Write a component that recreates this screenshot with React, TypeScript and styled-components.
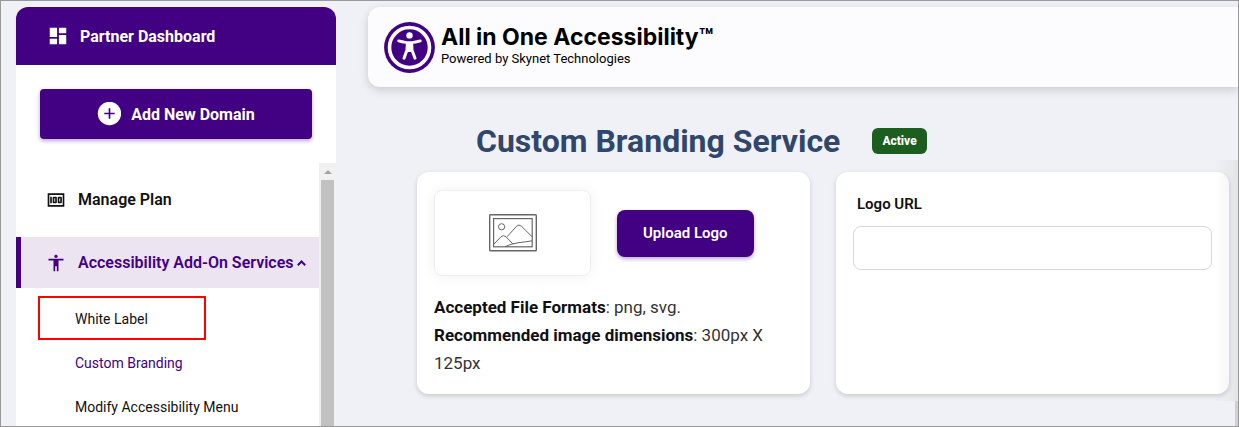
import React from "react";
import styled, { createGlobalStyle, css } from "styled-components";
import { MdAccessibility, MdDashboard, MdMoney } from "react-icons/md";

const purple = "#420083";

const GlobalStyle = createGlobalStyle`
  *, *::before, *::after { box-sizing: border-box; }
  body {
    margin: 0;
    background: #f0f1f6;
    color: #111;
    font-family: Roboto, "Liberation Sans", sans-serif;
  }
  button, input { font: inherit; }
`;

const Frame = styled.div`
  position: relative;
  display: flex;
  gap: 32px;
  height: 100vh;
  padding: 6px 0 0 15px;
  border: 1px solid #999;
  overflow: hidden;
`;

const Sidebar = styled.aside`
  display: flex;
  flex-direction: column;
  flex: 0 0 320px;
  background: #fff;
  border-radius: 12px 12px 0 0;
  overflow: hidden;
`;

const SidebarHeader = styled.div`
  display: flex;
  flex: none;
  align-items: center;
  gap: 11px;
  height: 58px;
  padding-left: 31px;
  background: ${purple};
  color: #fff;
  font-size: 16px;
  font-weight: 700;
`;

const AddButton = styled.button`
  display: flex;
  flex: none;
  align-items: center;
  justify-content: center;
  gap: 10px;
  height: 50px;
  margin: 24px;
  border: 0;
  border-radius: 4px;
  background: ${purple};
  box-shadow: 0 2px 4px rgba(66, 0, 131, 0.35);
  color: #fff;
  font-size: 16px;
  font-weight: 700;
`;

const NavArea = styled.div`
  display: flex;
  flex: 1;
  min-height: 0;
`;

const Nav = styled.nav`
  flex: 1;
  padding-top: 11px;
  overflow: hidden;
`;

const NavItem = styled.a<{ $active?: boolean }>`
  display: flex;
  align-items: center;
  height: 51px;
  margin-bottom: 12px;
  padding-left: 25px;
  border-left: 5px solid transparent;
  color: #111;
  font-size: 16px;
  font-weight: 600;
  text-decoration: none;
  white-space: nowrap;

  ${(p) =>
    p.$active &&
    css`
      margin-bottom: 8px;
      border-color: ${purple};
      background: #ece4f1;
      color: ${purple};
    `}
`;

const NavLabel = styled.span`
  margin: 0 4px 0 12px;
`;

const SubNav = styled.ul`
  margin: 0 0 0 22px;
  padding: 0;
  list-style: none;
`;

const SubLink = styled.a<{ $current?: boolean; $marked?: boolean }>`
  display: flex;
  align-items: center;
  width: ${(p) => (p.$marked ? "168px" : "auto")};
  height: 44px;
  padding: 2px 0 0 35px;
  border: 2px solid ${(p) => (p.$marked ? "#f00" : "transparent")};
  color: ${(p) => (p.$current ? purple : "#111")};
  font-size: 14px;
  text-decoration: none;
`;

const ScrollTrack = styled.div`
  display: flex;
  flex-direction: column;
  align-items: center;
  width: 17px;
  background: #f1f1f1;
`;

const ScrollArrow = styled.span`
  margin: 7px 0 6px;
  border: 4px solid transparent;
  border-top: 0;
  border-bottom-color: #a3a3a3;
`;

const ScrollThumb = styled.span`
  flex: 1;
  width: 13px;
  background: #c1c1c1;
`;

const Main = styled.main`
  flex: 1;
  min-width: 0;
`;

const TopBar = styled.header`
  display: flex;
  align-items: center;
  gap: 6px;
  height: 80px;
  padding-left: 16px;
  border-radius: 12px 0 0 12px;
  background: #fcfcfe;
  box-shadow: 0 3px 10px rgba(0, 0, 0, 0.16);
`;

const BrandText = styled.div`
  padding-bottom: 4px;
  font-size: 13px;
  line-height: 16px;
  color: #000;
`;

const BrandName = styled.div`
  font-family: Inter, Roboto, sans-serif;
  font-size: 23px;
  line-height: 28px;
  font-weight: 700;
`;

const Content = styled.section`
  padding: 32px 9px 0 49px;
`;

const TitleRow = styled.div`
  display: flex;
  align-items: center;
  gap: 32px;
  height: 44px;
  margin-bottom: 9px;
  padding-left: 59px;
`;

const Title = styled.h1`
  margin: 0;
  color: #30466b;
  font-size: 32px;
  font-weight: 700;
`;

const Badge = styled.span`
  padding: 0 10px;
  border-radius: 6px;
  background: #1b5e20;
  color: #fff;
  font-size: 12px;
  font-weight: 800;
  line-height: 26px;
`;

const Cards = styled.div`
  display: grid;
  grid-template-columns: 1fr 1fr;
  gap: 26px;
`;

const Card = styled.div`
  padding: 18px 17px 17px;
  border-radius: 12px;
  background: #fff;
  box-shadow: 0 2px 5px rgba(0, 0, 0, 0.16);
`;

const UploadRow = styled.div`
  display: flex;
  align-items: center;
  gap: 26px;
  margin-bottom: 17px;
`;

const Preview = styled.div`
  display: flex;
  align-items: center;
  justify-content: center;
  width: 157px;
  height: 86px;
  border: 1px solid #eee;
  border-radius: 8px;
  box-shadow: 0 0 14px rgba(0, 0, 0, 0.06);
`;

const UploadButton = styled.button`
  height: 47px;
  padding: 0 26px;
  border: 0;
  border-radius: 8px;
  background: ${purple};
  box-shadow: 0 2px 4px rgba(66, 0, 131, 0.35);
  color: #fff;
  font-size: 15px;
  font-weight: 600;
`;

const Hint = styled.p`
  margin: 0;
  color: #333;
  font-size: 17px;
  line-height: 28px;

  strong { color: #111; font-weight: 700; }
`;

const FieldLabel = styled.label`
  display: block;
  margin-bottom: 8px;
  padding-left: 4px;
  font-size: 15px;
  font-weight: 600;
  line-height: 28px;
`;

const TextField = styled.input`
  width: 100%;
  height: 44px;
  padding: 0 12px;
  border: 1px solid #d5d8dc;
  border-radius: 8px;
  background: #fff;
`;

const EdgeShade = styled.div`
  position: absolute;
  top: 159px;
  right: 0;
  width: 24px;
  height: 241px;
  background: linear-gradient(to right, transparent, rgba(0, 0, 0, 0.05));
  pointer-events: none;
`;

const EdgeBar = styled.div`
  position: absolute;
  top: 400px;
  right: 0;
  bottom: 0;
  width: 3px;
  background: #d0d0d2;
`;

const PlusCircle = () => (
  <svg width="24" height="24" viewBox="0 0 24 24" aria-hidden="true">
    <circle cx="12.5" cy="11.5" r="11.7" fill="#fff" />
    <path d="M12.5 6.3v10.4M7.3 11.5h10.4" stroke={purple} strokeWidth="1.7" />
  </svg>
);

const Chevron = () => (
  <svg width="9" height="6" viewBox="0 0 9 6" aria-hidden="true">
    <path d="M0.8 5.2L4.5 1.5l3.7 3.7" fill="none" stroke="currentColor" strokeWidth="2" />
  </svg>
);

const BrandLogo = () => (
  <svg width="51" height="51" viewBox="0 0 51 51" aria-hidden="true">
    <circle cx="25.5" cy="25.5" r="25.4" fill={purple} />
    <circle cx="25.5" cy="25.5" r="20" fill="none" stroke="#fff" strokeWidth="3.6" />
    <circle cx="25.5" cy="13.4" r="3.2" fill="#fff" />
    <path
      d="M14.6 18.9q5.4 1.5 8.4 1.6h5q3-.1 8.4-1.6"
      fill="none"
      stroke="#fff"
      strokeWidth="2.7"
      strokeLinecap="round"
    />
    <path
      d="M23.3 21.5h4.4l.3 6.5 3 8.2M23.3 21.5L23 28l-3 8.2"
      fill="none"
      stroke="#fff"
      strokeWidth="3"
      strokeLinecap="round"
      strokeLinejoin="round"
    />
    <path d="M22.5 20h6v7l-1.6 3h-2.8l-1.6-3z" fill="#fff" />
  </svg>
);

const PictureIcon = () => (
  <svg width="48" height="38" viewBox="0 0 48 38" fill="none" stroke="#666" aria-hidden="true">
    <rect x="0.7" y="0.8" width="46.6" height="36" rx="0.8" strokeWidth="1.4" />
    <rect x="4.6" y="4.6" width="38.6" height="28.2" strokeWidth="1.2" />
    <circle cx="12.6" cy="12.8" r="3.1" />
    <path d="M4.6 30.4l7.4-7.6q2.6-2.4 5 0l7.2 7.4M18 22.8l9.6-10.6q2.4-2.4 4.8 0l10.8 10.6M16 32.6q7-3.2 14-4t13.2-1.8" />
  </svg>
);

export default function App() {
  return (
    <>
      <GlobalStyle />
      <Frame>
        <Sidebar>
          <SidebarHeader>
            <MdDashboard size={22} />
            Partner Dashboard
          </SidebarHeader>
          <AddButton type="button">
            <PlusCircle />
            Add New Domain
          </AddButton>
          <NavArea>
            <Nav>
              <NavItem href="#plan">
                <MdMoney size={20} />
                <NavLabel>Manage Plan</NavLabel>
              </NavItem>
              <NavItem href="#services" $active>
                <MdAccessibility size={20} />
                <NavLabel>Accessibility Add-On Services</NavLabel>
                <Chevron />
              </NavItem>
              <SubNav>
                <li><SubLink href="#white-label" $marked>White Label</SubLink></li>
                <li><SubLink href="#branding" $current>Custom Branding</SubLink></li>
                <li><SubLink href="#menu">Modify Accessibility Menu</SubLink></li>
              </SubNav>
            </Nav>
            <ScrollTrack aria-hidden="true">
              <ScrollArrow />
              <ScrollThumb />
            </ScrollTrack>
          </NavArea>
        </Sidebar>
        <Main>
          <TopBar>
            <BrandLogo />
            <BrandText>
              <BrandName>All in One Accessibility™</BrandName>
              Powered by Skynet Technologies
            </BrandText>
          </TopBar>
          <Content>
            <TitleRow>
              <Title>Custom Branding Service</Title>
              <Badge>Active</Badge>
            </TitleRow>
            <Cards>
              <Card>
                <UploadRow>
                  <Preview><PictureIcon /></Preview>
                  <UploadButton type="button">Upload Logo</UploadButton>
                </UploadRow>
                <Hint><strong>Accepted File Formats</strong>: png, svg.</Hint>
                <Hint><strong>Recommended image dimensions</strong>: 300px X 125px</Hint>
              </Card>
              <Card>
                <FieldLabel htmlFor="logo-url">Logo URL</FieldLabel>
                <TextField id="logo-url" type="url" />
              </Card>
            </Cards>
          </Content>
        </Main>
        <EdgeShade />
        <EdgeBar />
      </Frame>
    </>
  );
}
